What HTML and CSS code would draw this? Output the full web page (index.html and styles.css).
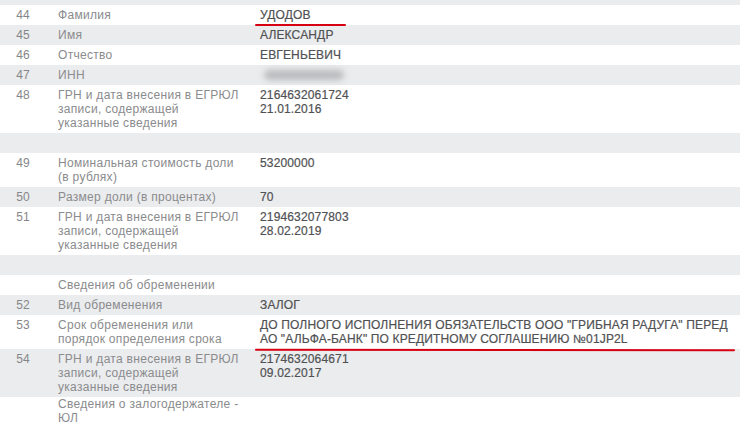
FILE: index.html
```html
<!DOCTYPE html>
<html lang="ru">
<head>
<meta charset="utf-8">
<title>Сведения</title>
<link rel="stylesheet" href="styles.css">
</head>
<body>
<div class="table">
  <div class="row cut"></div>
  <div class="row">
    <div class="num">44</div>
    <div class="label">Фамилия</div>
    <div class="value"><span class="mark">УДОДОВ<span class="underline short"></span></span></div>
  </div>
  <div class="row">
    <div class="num">45</div>
    <div class="label">Имя</div>
    <div class="value">АЛЕКСАНДР</div>
  </div>
  <div class="row">
    <div class="num">46</div>
    <div class="label">Отчество</div>
    <div class="value">ЕВГЕНЬЕВИЧ</div>
  </div>
  <div class="row">
    <div class="num">47</div>
    <div class="label">ИНН</div>
    <div class="value"><span class="blurred"></span></div>
  </div>
  <div class="row">
    <div class="num">48</div>
    <div class="label">ГРН и дата внесения в ЕГРЮЛ<br>записи, содержащей<br>указанные сведения</div>
    <div class="value">2164632061724<br>21.01.2016</div>
  </div>
  <div class="row empty"></div>
  <div class="row">
    <div class="num">49</div>
    <div class="label">Номинальная стоимость доли<br>(в рублях)</div>
    <div class="value">53200000</div>
  </div>
  <div class="row">
    <div class="num">50</div>
    <div class="label">Размер доли (в процентах)</div>
    <div class="value">70</div>
  </div>
  <div class="row">
    <div class="num">51</div>
    <div class="label">ГРН и дата внесения в ЕГРЮЛ<br>записи, содержащей<br>указанные сведения</div>
    <div class="value">2194632077803<br>28.02.2019</div>
  </div>
  <div class="row empty"></div>
  <div class="row">
    <div class="num"></div>
    <div class="label">Сведения об обременении</div>
    <div class="value"></div>
  </div>
  <div class="row">
    <div class="num">52</div>
    <div class="label">Вид обременения</div>
    <div class="value">ЗАЛОГ</div>
  </div>
  <div class="row">
    <div class="num">53</div>
    <div class="label">Срок обременения или<br>порядок определения срока</div>
    <div class="value long">ДО ПОЛНОГО ИСПОЛНЕНИЯ ОБЯЗАТЕЛЬСТВ ООО "ГРИБНАЯ РАДУГА" ПЕРЕД АО "АЛЬФА-БАНК" ПО КРЕДИТНОМУ СОГЛАШЕНИЮ №01JP2L<span class="underline wide"></span></div>
  </div>
  <div class="row">
    <div class="num">54</div>
    <div class="label">ГРН и дата внесения в ЕГРЮЛ<br>записи, содержащей<br>указанные сведения</div>
    <div class="value">2174632064671<br>09.02.2017</div>
  </div>
  <div class="row last">
    <div class="num"></div>
    <div class="label">Сведения о залогодержателе -<br>ЮЛ</div>
    <div class="value"></div>
  </div>
</div>
</body>
</html>
```

FILE: styles.css
```css
html, body {
  margin: 0;
  padding: 0;
  background: #ffffff;
}

body {
  font-family: "Liberation Sans", Arial, sans-serif;
  font-size: 12px;
  line-height: 14px;
  color: #8a8b8d;
  overflow: hidden;
}

.table {
  display: flex;
  flex-direction: column;
}

.row {
  display: grid;
  grid-template-columns: 46px 214px 1fr;
  padding: 3px 0;
  min-height: 14px;
  background: #ffffff;
}

.row:nth-child(odd) {
  background: #ebecee;
}

.row.cut {
  min-height: 0;
  height: 5px;
  padding: 0;
}

.row.last {
  padding: 0;
}

.num {
  text-align: center;
  color: #858688;
  letter-spacing: 0.2px;
}

.label {
  padding: 0 8px 0 12px;
  letter-spacing: 0.3px;
  white-space: nowrap;
}

.value {
  position: relative;
  color: #505153;
  padding-right: 6px;
  letter-spacing: 0.15px;
  -webkit-text-stroke: 0.2px #505153;
}

.mark {
  position: relative;
  display: inline-block;
}

.underline {
  position: absolute;
  height: 2px;
  background: #d60012;
  border-radius: 1px;
}

.underline.short {
  left: -5px;
  top: 16px;
  width: 91px;
}

.underline.wide {
  left: -5px;
  top: 31px;
  width: 480px;
  transform: rotate(0.08deg);
}

.blurred {
  display: block;
  width: 80px;
  height: 10px;
  margin: 2px 0 0 4px;
  background: #b9babc;
  border-radius: 5px;
  filter: blur(3px);
}
```
